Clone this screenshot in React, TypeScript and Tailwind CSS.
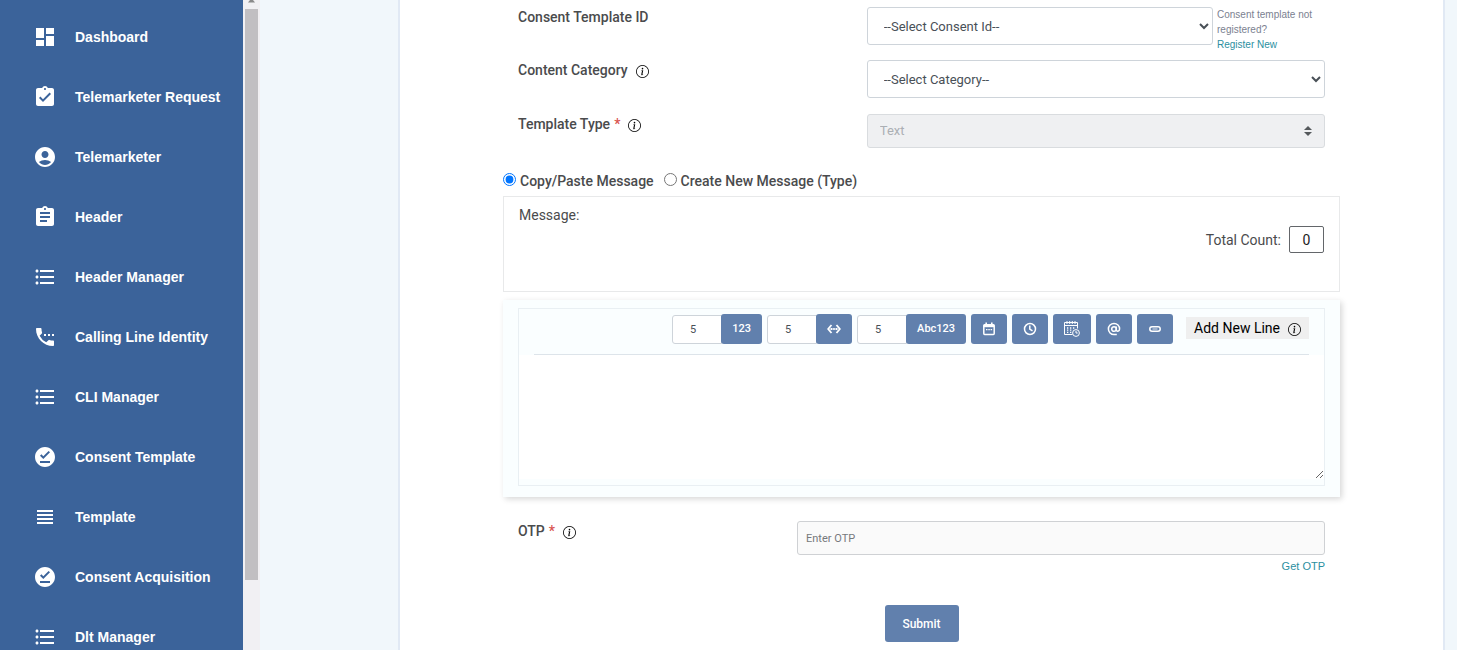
import React, { useState } from 'react';
import { IconType } from 'react-icons';
import {
  MdAccountCircle,
  MdAssignment,
  MdAssignmentTurnedIn,
  MdDashboard,
  MdFormatListBulleted,
  MdOfflinePin,
  MdSettingsPhone,
  MdViewHeadline,
} from 'react-icons/md';
import { BsInfoCircle } from 'react-icons/bs';

interface NavItem {
  label: string;
  icon: IconType;
}

const NAV_ITEMS: NavItem[] = [
  { label: 'Dashboard', icon: MdDashboard },
  { label: 'Telemarketer Request', icon: MdAssignmentTurnedIn },
  { label: 'Telemarketer', icon: MdAccountCircle },
  { label: 'Header', icon: MdAssignment },
  { label: 'Header Manager', icon: MdFormatListBulleted },
  { label: 'Calling Line Identity', icon: MdSettingsPhone },
  { label: 'CLI Manager', icon: MdFormatListBulleted },
  { label: 'Consent Template', icon: MdOfflinePin },
  { label: 'Template', icon: MdViewHeadline },
  { label: 'Consent Acquisition', icon: MdOfflinePin },
  { label: 'Dlt Manager', icon: MdFormatListBulleted },
];

const TOOL_BUTTON =
  'flex h-[30px] shrink-0 items-center justify-center rounded-[3px] bg-[#6180ad] text-[11px] font-medium text-white';

const Sidebar: React.FC = () => (
  <aside className="flex shrink-0">
    <nav className="w-[243px] bg-[#3b639a] pt-[7px]">
      {NAV_ITEMS.map(({ label, icon: Icon }) => (
        <a
          key={label}
          href="#"
          className="flex h-[60px] items-center gap-[18px] pl-[33px] font-['Liberation_Sans',sans-serif] text-[14px] font-bold text-white"
        >
          <Icon className="size-6" />
          {label}
        </a>
      ))}
    </nav>
    {/* Scroll track */}
    <div className="flex w-[17px] flex-col items-center bg-[#f1f0f3]">
      <svg className="h-[9px] w-[9px]" viewBox="0 0 9 9" fill="#8a8a8a">
        <path d="M4.5 -2L8 2.6H1z" />
      </svg>
      <div className="h-[571px] w-[13px] bg-[#c1bfc2]"></div>
    </div>
  </aside>
);

const RangeArrows: React.FC = () => (
  <svg className="h-[10px] w-[14px]" viewBox="0 0 14 10" fill="none" stroke="currentColor" strokeWidth="1.8">
    <path d="M4.500 1L1.200 5l3.300 4M9.500 1l3.300 4-3.300 4" />
    <path d="M3.500 5h2M6.200 5h1.600M8.500 5h2" />
  </svg>
);

const CalendarIcon: React.FC = () => (
  <svg className="size-[14px]" viewBox="0 0 14 14" fill="none" stroke="currentColor">
    <rect x="1.800" y="2.800" width="10.400" height="9.600" rx="0.800" strokeWidth="1.500" />
    <path d="M1.800 4h10.400" strokeWidth="2.400" />
    <path d="M4.200 0.600v2.400M9.800 0.600v2.400" strokeWidth="1.600" />
    <path d="M4 7.600h1.500M6.300 7.600h1.500M8.600 7.600h1.500" strokeWidth="1.400" />
  </svg>
);

const ClockIcon: React.FC = () => (
  <svg className="size-[14px]" viewBox="0 0 14 14" fill="none" stroke="currentColor" strokeWidth="1.500">
    <circle cx="7" cy="7" r="5.500" />
    <path d="M6.800 3.500v3.700l2.700 1.700" />
  </svg>
);

const AtIcon: React.FC = () => (
  <svg className="size-[14px]" viewBox="0 0 14 14" fill="none" stroke="currentColor" strokeWidth="1.500">
    <circle cx="7" cy="7" r="2.300" />
    <path d="M9.300 4.500v3.200c0 2.200 3.300 1.900 3.300-.7A5.600 5.600 0 1 0 7 12.600h2.800" />
  </svg>
);

const LinkPill: React.FC = () => (
  <svg className="h-[6px] w-3" viewBox="0 0 12 6" fill="none" stroke="currentColor" strokeWidth="1.5">
    <rect x="0.8" y="0.8" width="10.4" height="4.400" rx="2.200" />
    <path d="M3.500 3h5" strokeWidth="0.8" />
  </svg>
);

const CalendarClock: React.FC = () => (
  <svg className="size-4" viewBox="0 0 16 16" fill="none" stroke="currentColor" strokeWidth="1">
    <path d="M8.5 13.5H.5v-12h13v6" />
    <path d="M.5 4.5h13" />
    <path d="M3 0v3M5.700 0v3M8.300 0v3M11 0v3" />
    <path
      d="M3 7h1.300M6 7h1.300M9 7h1.300M3 9.200h1.300M6 9.200h1.300M3 11.400h1.300M6 11.400h1.300"
      strokeWidth="1.3"
    />
    <circle cx="12" cy="12" r="3.400" />
    <path d="M12 10v2h1.700" />
  </svg>
);

interface FieldLabelProps {
  htmlFor: string;
  text: string;
  required?: boolean;
  info?: boolean;
}

const FieldLabel: React.FC<FieldLabelProps> = ({ htmlFor, text, required, info }) => (
  <label htmlFor={htmlFor} className="flex h-5 items-center text-[14px] font-medium text-[#4a4b4d]">
    {text}
    {required && <span className="ml-1 text-[#d9534f]">*</span>}
    {info && <BsInfoCircle className="mt-[3px] ml-2 size-[13px] text-black" />}
  </label>
);

interface SizedToolProps {
  name: string;
  width: string;
  children: React.ReactNode;
}

// Length box joined to the button that inserts the variable
const SizedTool: React.FC<SizedToolProps> = ({ name, width, children }) => (
  <div className="flex h-[30px] items-end">
    <input
      aria-label={`${name} length`}
      defaultValue="5"
      className="h-[29px] w-[50px] rounded-l-[3px] border border-[#ced4da] bg-white pr-2 text-center text-[11px] text-[#495057]"
    />
    <button type="button" aria-label={name} className={`${TOOL_BUTTON} -ml-px ${width}`}>
      {children}
    </button>
  </div>
);

const App: React.FC = () => {
  const [mode, setMode] = useState<'paste' | 'type'>('paste');

  return (
    <div className="flex h-screen overflow-hidden bg-[#f1f7fb] font-[Roboto,sans-serif] text-[#4a4b4d]">
      <Sidebar />

      <main className="mr-3 ml-[138px] min-w-0 flex-1 border-x-2 border-[#e1e9f4] bg-white px-[103px] pt-[7px]">
        <form onSubmit={(e) => e.preventDefault()}>
          <div className="grid grid-cols-12">
            <div className="col-span-5 px-[15px]">
              <FieldLabel htmlFor="consent" text="Consent Template ID" />
            </div>
            <div className="col-span-7 flex h-[53px] gap-1 px-[15px]">
              <select
                id="consent"
                className="h-[38px] min-w-0 flex-1 rounded-[3px] border border-[#ced4da] bg-white px-3 text-[13px] text-[#495057]"
              >
                <option>--Select Consent Id--</option>
              </select>
              <p className="w-[108px] font-['Liberation_Sans',sans-serif] text-[10px] leading-[15px] text-[#7b8190]">
                Consent template not registered?
                <a href="#" className="block text-[#2b8f9f]">Register New</a>
              </p>
            </div>
          </div>

          <div className="grid grid-cols-12">
            <div className="col-span-5 px-[15px]">
              <FieldLabel htmlFor="category" text="Content Category" info />
            </div>
            <div className="col-span-7 h-[54px] px-[15px]">
              <select
                id="category"
                className="h-[38px] w-full rounded-[3px] border border-[#ced4da] bg-white px-3 text-[13px] text-[#495057]"
              >
                <option>--Select Category--</option>
              </select>
            </div>
          </div>

          <div className="grid grid-cols-12">
            <div className="col-span-5 px-[15px]">
              <FieldLabel htmlFor="type" text="Template Type" required info />
            </div>
            <div className="relative col-span-7 px-[15px]">
              <select
                id="type"
                disabled
                className="h-[34px] w-full appearance-none rounded-[3px] border border-[#d9dcdf] bg-[#eff0f2] px-3 text-[13px] text-[#abafb4] opacity-100"
              >
                <option>Text</option>
              </select>
              <svg className="absolute top-3 right-7 h-[10px] w-2" viewBox="0 0 8 10" fill="#55595c">
                <path d="M4 0L8 4H0z" />
                <path d="M4 10L0 6h8z" />
              </svg>
            </div>
          </div>

          <div className="mt-[23px] flex h-[25px] gap-[10px] text-[14px] leading-5 font-medium">
            <label className="flex gap-1">
              <input
                type="radio"
                name="mode"
                className="mt-[2px] size-[13px]"
                checked={mode === 'paste'}
                onChange={() => setMode('paste')}
              />
              Copy/Paste Message
            </label>
            <label className="flex gap-1">
              <input
                type="radio"
                name="mode"
                className="mt-[2px] size-[13px]"
                checked={mode === 'type'}
                onChange={() => setMode('type')}
              />
              Create New Message (Type)
            </label>
          </div>

          <div className="h-24 border border-[#e8e9ea] px-[15px] pt-2 text-[14px] leading-5">
            <p>Message:</p>
            <div className="mt-px flex items-center justify-end gap-2">
              <label htmlFor="count">Total Count:</label>
              <input
                id="count"
                readOnly
                value="0"
                className="h-[27px] w-[35px] rounded-[2px] border border-[#63666a] text-center text-[14px] text-[#222]"
              />
            </div>
          </div>

          {/* Message editor */}
          <div className="mt-2 bg-[#fafeff] px-[15px] pt-2 pb-[11px] shadow-[2px_2px_6px_rgba(0,0,0,0.16)]">
            <div className="border border-[#e9eff3] pb-[6px]">
              <div className="mx-[15px] flex h-[46px] justify-end gap-[5px] border-b border-[#dde4ea] pt-[5px]">
                <SizedTool name="Numeric" width="w-[41px]">123</SizedTool>
                <SizedTool name="Variable range" width="w-9">
                  <RangeArrows />
                </SizedTool>
                <SizedTool name="Alphanumeric" width="w-[60px]">Abc123</SizedTool>
                <button type="button" aria-label="Date" className={`${TOOL_BUTTON} w-9`}>
                  <CalendarIcon />
                </button>
                <button type="button" aria-label="Time" className={`${TOOL_BUTTON} w-9`}>
                  <ClockIcon />
                </button>
                <button type="button" aria-label="Date and time" className={`${TOOL_BUTTON} w-[38px]`}>
                  <CalendarClock />
                </button>
                <button type="button" aria-label="Email" className={`${TOOL_BUTTON} w-9`}>
                  <AtIcon />
                </button>
                <button type="button" aria-label="Link" className={`${TOOL_BUTTON} w-9`}>
                  <LinkPill />
                </button>
                <button
                  type="button"
                  className="mt-[3px] ml-2 flex h-[22px] items-center gap-2 bg-[#efefef] px-2 text-[14px] text-black"
                >
                  Add New Line
                  <BsInfoCircle className="mt-[2px] size-[13px]" />
                </button>
              </div>
              <textarea aria-label="Message" className="block h-[124px] w-full resize bg-white px-4 py-2 text-[14px]" />
            </div>
          </div>

          <div className="mt-6 grid grid-cols-12">
            <div className="col-span-4 px-[15px]">
              <FieldLabel htmlFor="otp" text="OTP" required info />
            </div>
            <div className="col-span-8 px-[15px]">
              <input
                id="otp"
                placeholder="Enter OTP"
                className="h-[34px] w-full rounded-[3px] border border-[#cfd1d4] bg-[#fafafa] px-2 text-[11px] placeholder:text-[#76797c]"
              />
              <a
                href="#"
                className="mt-1 block text-right font-['Liberation_Sans',sans-serif] text-[11px] leading-[15px] text-[#2b8f9f]"
              >
                Get OTP
              </a>
            </div>
          </div>

          <div className="mt-[31px] flex justify-center">
            <button type="submit" className="h-[37px] w-[74px] rounded-[3px] bg-[#6180ad] text-[12px] font-medium text-white">
              Submit
            </button>
          </div>
        </form>
      </main>
    </div>
  );
};

export default App;
